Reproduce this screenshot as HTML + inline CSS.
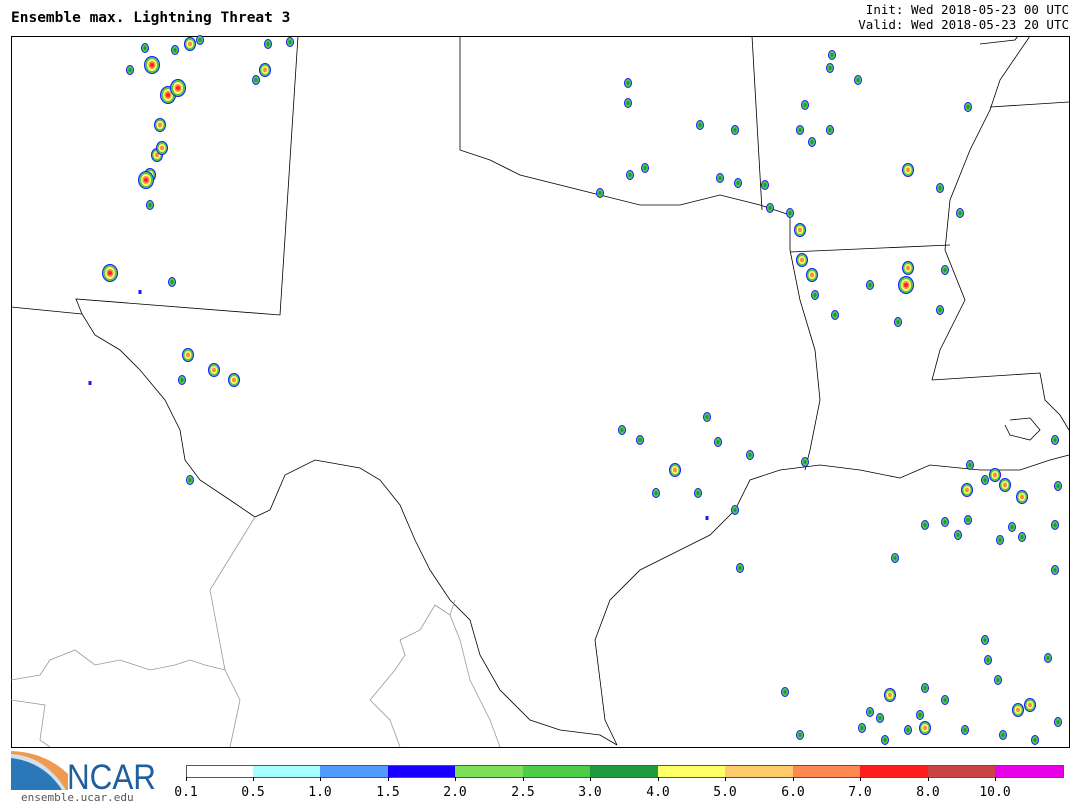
<!DOCTYPE html>
<html><head><meta charset="utf-8"><style>
body{margin:0;background:#fff;width:1080px;height:810px;overflow:hidden;font-family:"DejaVu Sans Mono","Liberation Mono",monospace;}
.t{position:absolute;white-space:pre;color:#000}
</style></head><body>
<div class="t" style="left:11px;top:10px;font-size:14.5px;font-weight:bold;">Ensemble max. Lightning Threat 3</div>
<div class="t" style="right:11px;top:2px;font-size:12.5px;text-align:right;line-height:15px;">Init: Wed 2018-05-23 00 UTC
Valid: Wed 2018-05-23 20 UTC</div>
<svg width="1080" height="810" style="position:absolute;left:0;top:0" xmlns="http://www.w3.org/2000/svg">
<defs>
<g id="a"><ellipse cx="0" cy="0" rx="4" ry="5" fill="#1a1aff"/><ellipse cx="0" cy="0" rx="3" ry="4" fill="#50c850"/><ellipse rx="1.5" ry="2" fill="#1e9a3e"/></g>
<g id="b"><ellipse rx="6" ry="7" fill="#1a1aff"/><ellipse rx="5" ry="6" fill="#50c850"/><ellipse rx="3.5" ry="4" fill="#ffff66"/><ellipse rx="2" ry="2.5" fill="#ff8850"/></g>
<g id="c"><ellipse rx="8" ry="9" fill="#1a1aff"/><ellipse rx="7" ry="8" fill="#50c850"/><ellipse rx="5" ry="6" fill="#ffff66"/><ellipse rx="3.5" ry="4" fill="#ff8850"/><ellipse rx="2" ry="2" fill="#ff2020"/></g>
<g id="d"><rect x="-1.5" y="-2" width="3" height="4" fill="#1a1aff"/></g>
</defs>
<rect x="11.5" y="36.5" width="1058" height="711" fill="#fff" stroke="#000"/>
<g fill="none" stroke="#000" stroke-width="0.8">
<polyline points="298,36 280,315 76,299 82,314 95,335 120,350 140,370 165,400 180,430 185,460 200,480 230,500 255,517 270,510 285,475 315,460 360,468 380,480 400,505 415,540 430,570 450,600 470,620 480,655 500,690 530,720 560,730 600,735 617,745"/>
<polyline points="11,307 82,314"/>
<polyline points="617,745 605,720 600,680 595,640 610,600 640,570 680,550 710,535 735,510 750,480 780,470 820,465 860,470 900,478 930,465 980,470 1020,470 1050,460 1069,455"/>
<polyline points="460,36 460,150 490,160 520,175 560,185 600,195 640,205 680,205 720,195 760,205 790,215 790,250 800,300 815,350 820,400 810,450 805,470"/>
<polyline points="752,36 762,210"/>
<polyline points="790,252 950,245"/>
<polyline points="932,380 1040,373 1045,400 1060,415 1069,430"/>
<polyline points="1030,36 1000,80 990,110 970,150 950,200 945,250 965,300 940,350 932,380"/>
<polyline points="980,44 1015,40 1018,36"/>
<polyline points="990,107 1069,102"/>
<polyline points="1010,420 1030,418 1040,430 1030,440 1010,435 1005,425"/>
</g>
<g fill="none" stroke="#999" stroke-width="0.8">
<polyline points="255,517 210,590 225,670 240,700 230,747"/>
<polyline points="11,680 40,675 50,660 75,650 95,665 120,660 150,670 175,665 190,660 205,665 225,670"/>
<polyline points="11,700 45,705 40,740 50,747"/>
<polyline points="370,700 395,670 405,655 400,640 420,630 435,605 450,615 460,640 470,680 490,720 500,747"/>
<polyline points="370,700 390,720 400,747"/>
<polyline points="450,615 455,600"/>
</g>
<g>
<use href="#c" x="152" y="65"/><use href="#c" x="168" y="95"/><use href="#c" x="178" y="88"/><use href="#b" x="160" y="125"/><use href="#b" x="157" y="155"/><use href="#b" x="150" y="175"/><use href="#c" x="146" y="180"/><use href="#b" x="162" y="148"/><use href="#a" x="145" y="48"/><use href="#a" x="175" y="50"/><use href="#b" x="190" y="44"/><use href="#a" x="200" y="40"/><use href="#a" x="130" y="70"/><use href="#a" x="150" y="205"/>
<use href="#b" x="265" y="70"/><use href="#a" x="256" y="80"/><use href="#a" x="268" y="44"/><use href="#a" x="290" y="42"/>
<use href="#c" x="110" y="273"/><use href="#a" x="172" y="282"/><use href="#d" x="140" y="292"/>
<use href="#b" x="188" y="355"/><use href="#b" x="214" y="370"/><use href="#b" x="234" y="380"/><use href="#a" x="182" y="380"/><use href="#d" x="90" y="383"/><use href="#a" x="190" y="480"/>
<use href="#a" x="628" y="83"/><use href="#a" x="628" y="103"/><use href="#a" x="700" y="125"/><use href="#a" x="735" y="130"/><use href="#a" x="645" y="168"/><use href="#a" x="630" y="175"/><use href="#a" x="600" y="193"/><use href="#a" x="720" y="178"/><use href="#a" x="738" y="183"/>
<use href="#a" x="832" y="55"/><use href="#a" x="830" y="68"/><use href="#a" x="858" y="80"/><use href="#a" x="805" y="105"/><use href="#a" x="830" y="130"/><use href="#a" x="800" y="130"/><use href="#a" x="812" y="142"/><use href="#b" x="908" y="170"/><use href="#a" x="968" y="107"/><use href="#a" x="940" y="188"/><use href="#a" x="960" y="213"/><use href="#a" x="765" y="185"/>
<use href="#b" x="800" y="230"/><use href="#b" x="802" y="260"/><use href="#b" x="812" y="275"/><use href="#a" x="815" y="295"/><use href="#a" x="790" y="213"/><use href="#a" x="770" y="208"/>
<use href="#c" x="906" y="285"/><use href="#b" x="908" y="268"/><use href="#a" x="870" y="285"/><use href="#a" x="940" y="310"/><use href="#a" x="835" y="315"/><use href="#a" x="945" y="270"/><use href="#a" x="898" y="322"/>
<use href="#a" x="622" y="430"/><use href="#a" x="640" y="440"/><use href="#a" x="707" y="417"/><use href="#a" x="718" y="442"/><use href="#a" x="750" y="455"/><use href="#b" x="675" y="470"/><use href="#a" x="698" y="493"/><use href="#a" x="656" y="493"/><use href="#a" x="735" y="510"/><use href="#a" x="740" y="568"/><use href="#d" x="707" y="518"/><use href="#a" x="805" y="462"/>
<use href="#b" x="967" y="490"/><use href="#b" x="995" y="475"/><use href="#b" x="1005" y="485"/><use href="#b" x="1022" y="497"/><use href="#a" x="985" y="480"/><use href="#a" x="1058" y="486"/><use href="#a" x="1055" y="440"/><use href="#a" x="970" y="465"/>
<use href="#a" x="925" y="525"/><use href="#a" x="945" y="522"/><use href="#a" x="968" y="520"/><use href="#a" x="1012" y="527"/><use href="#a" x="1022" y="537"/><use href="#a" x="1055" y="525"/><use href="#a" x="1000" y="540"/><use href="#a" x="895" y="558"/><use href="#a" x="1055" y="570"/><use href="#a" x="958" y="535"/>
<use href="#a" x="985" y="640"/><use href="#a" x="988" y="660"/><use href="#a" x="1048" y="658"/><use href="#a" x="998" y="680"/><use href="#a" x="925" y="688"/><use href="#b" x="890" y="695"/><use href="#a" x="870" y="712"/><use href="#a" x="880" y="718"/><use href="#b" x="1030" y="705"/><use href="#b" x="1018" y="710"/><use href="#a" x="1058" y="722"/><use href="#b" x="925" y="728"/><use href="#a" x="908" y="730"/><use href="#a" x="885" y="740"/><use href="#a" x="862" y="728"/><use href="#a" x="785" y="692"/><use href="#a" x="800" y="735"/><use href="#a" x="965" y="730"/><use href="#a" x="1003" y="735"/><use href="#a" x="1035" y="740"/><use href="#a" x="945" y="700"/><use href="#a" x="920" y="715"/>
</g>
<g stroke="none">
<rect x="186" y="765" width="67" height="12" fill="#fff"/>
<rect x="253" y="765" width="67" height="12" fill="#a5ffff"/>
<rect x="320" y="765" width="68" height="12" fill="#529bff"/>
<rect x="388" y="765" width="67" height="12" fill="#1800ff"/>
<rect x="455" y="765" width="68" height="12" fill="#7ee05a"/>
<rect x="523" y="765" width="67" height="12" fill="#4ecb48"/>
<rect x="590" y="765" width="68" height="12" fill="#209940"/>
<rect x="658" y="765" width="67" height="12" fill="#ffff66"/>
<rect x="725" y="765" width="68" height="12" fill="#ffcb6a"/>
<rect x="793" y="765" width="67" height="12" fill="#ff8850"/>
<rect x="860" y="765" width="68" height="12" fill="#ff1c1c"/>
<rect x="928" y="765" width="67" height="12" fill="#ca4242"/>
<rect x="995" y="765" width="69" height="12" fill="#e800e8"/>
</g>
<rect x="186.5" y="765.5" width="877" height="12" fill="none" stroke="#555"/>
<g stroke="#000"><path d="M186.5 777v4M253.5 777v4M320.5 777v4M388.5 777v4M455.5 777v4M523.5 777v4M590.5 777v4M658.5 777v4M725.5 777v4M793.5 777v4M860.5 777v4M928.5 777v4M995.5 777v4"/></g>
<g font-family="DejaVu Sans Mono, Liberation Mono, monospace" font-size="13" text-anchor="middle" fill="#000">
<text x="186" y="796">0.1</text><text x="253" y="796">0.5</text><text x="320" y="796">1.0</text><text x="388" y="796">1.5</text><text x="455" y="796">2.0</text><text x="523" y="796">2.5</text><text x="590" y="796">3.0</text><text x="658" y="796">4.0</text><text x="725" y="796">5.0</text><text x="793" y="796">6.0</text><text x="860" y="796">7.0</text><text x="928" y="796">8.0</text><text x="995" y="796">10.0</text>
</g>
<path d="M11 751 Q45 752 68 774 L68 790 L11 790 Z" fill="#f09a50"/>
<path d="M11 754 Q45 756 66 790 L11 790 Z" fill="#cfe0ee"/>
<path d="M11 758 Q44 762 62 790 L11 790 Z" fill="#2a78b8"/>
<text x="67" y="789" font-family="Liberation Sans, sans-serif" font-size="35" fill="#1f5f9e" textLength="89" lengthAdjust="spacingAndGlyphs">NCAR</text>
<text x="21" y="801" font-family="DejaVu Sans Mono, monospace" font-size="11" fill="#555">ensemble.ucar.edu</text>
</svg>
</body></html>
